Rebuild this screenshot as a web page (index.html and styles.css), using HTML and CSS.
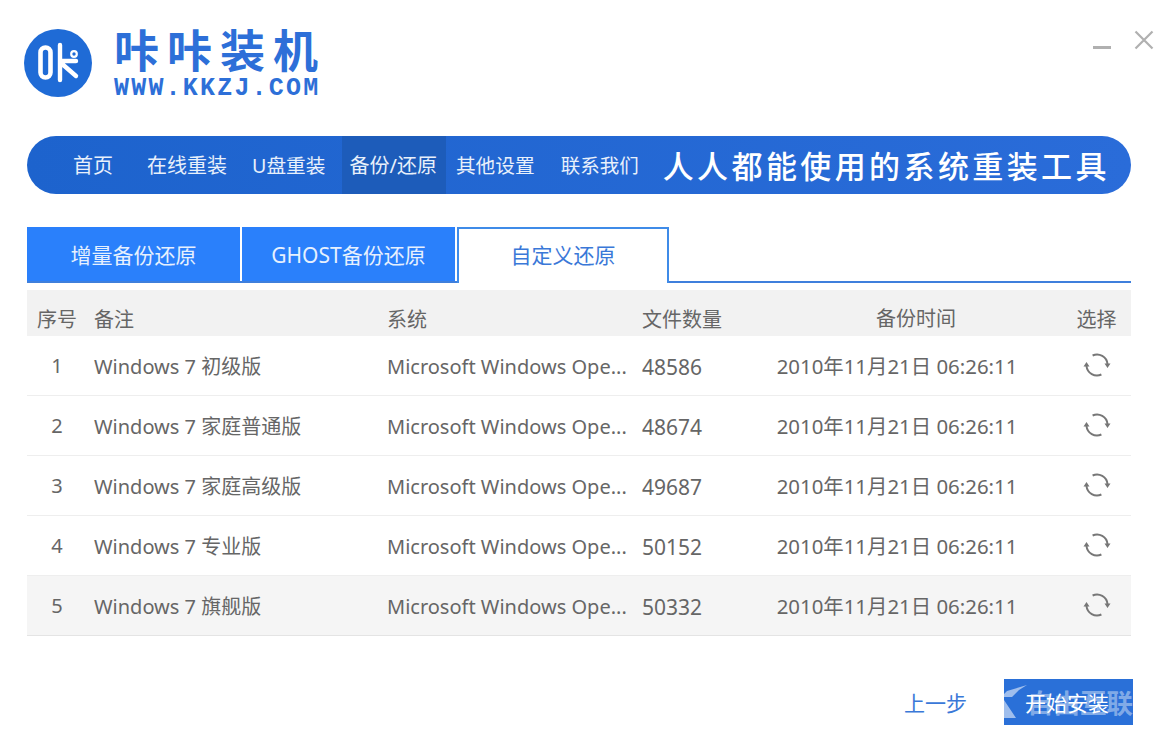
FILE: index.html
```html
<!DOCTYPE html>
<html lang="zh-CN">
<head>
<meta charset="utf-8">
<title>咔咔装机</title>
<link rel="stylesheet" href="styles.css">
</head>
<body>
<div class="app">
  <header class="top">
    <div class="brand">
      <svg class="mark" viewBox="0 0 68 68" width="68" height="68">
        <circle cx="34" cy="34" r="34" fill="#1f6bd6"/>
        <rect x="16.5" y="18.5" width="10" height="30" rx="5" fill="none" stroke="#fff" stroke-width="4.6"/>
        <path d="M36 16v35M36 32H52M37 34 52 47" fill="none" stroke="#fff" stroke-width="4.4" stroke-linecap="round"/>
        <circle cx="50" cy="25" r="2.8" fill="none" stroke="#fff" stroke-width="2.2"/>
      </svg>
      <div class="brand-text">
        <div class="brand-name">咔咔装机</div>
        <div class="brand-url">WWW.KKZJ.COM</div>
      </div>
    </div>
    <div class="win-btns">
      <svg class="win-min" width="18" height="4" viewBox="0 0 18 4"><rect width="18" height="3" fill="#b0b0b0"/></svg>
      <svg width="20" height="20" viewBox="0 0 20 20"><path d="M1.500 1.500 18.500 18.500M18.500 1.500 1.500 18.500" stroke="#b0b0b0" stroke-width="2.2" fill="none"/></svg>
    </div>
  </header>

  <nav class="nav">
    <a class="nav-item i-home">首页</a>
    <a class="nav-item i-online">在线重装</a>
    <a class="nav-item i-usb">U盘重装</a>
    <a class="nav-item active">备份/还原</a>
    <a class="nav-item i-other">其他设置</a>
    <a class="nav-item i-contact">联系我们</a>
    <span class="slogan">人人都能使用的系统重装工具</span>
  </nav>

  <div class="tabs">
    <a class="tab">增量备份还原</a>
    <a class="tab">GHOST备份还原</a>
    <a class="tab current">自定义还原</a>
  </div>

  <div class="table">
    <div class="row head">
      <span class="c-no">序号</span><span class="c-note">备注</span><span>系统</span><span>文件数量</span><span class="c-time">备份时间</span><span class="c-act">选择</span>
    </div>
    <div class="row">
      <span class="c-no">1</span><span class="c-note">Windows 7 初级版</span><span class="c-sys">Microsoft Windows Ope...</span><span class="c-num">48586</span><span class="c-time">2010年11月21日 06:26:11</span>
      <span class="c-act"><svg class="restore" viewBox="0 0 28 28"><use href="#r"/></svg></span>
    </div>
    <div class="row">
      <span class="c-no">2</span><span class="c-note">Windows 7 家庭普通版</span><span class="c-sys">Microsoft Windows Ope...</span><span class="c-num">48674</span><span class="c-time">2010年11月21日 06:26:11</span>
      <span class="c-act"><svg class="restore" viewBox="0 0 28 28"><use href="#r"/></svg></span>
    </div>
    <div class="row">
      <span class="c-no">3</span><span class="c-note">Windows 7 家庭高级版</span><span class="c-sys">Microsoft Windows Ope...</span><span class="c-num">49687</span><span class="c-time">2010年11月21日 06:26:11</span>
      <span class="c-act"><svg class="restore" viewBox="0 0 28 28"><use href="#r"/></svg></span>
    </div>
    <div class="row">
      <span class="c-no">4</span><span class="c-note">Windows 7 专业版</span><span class="c-sys">Microsoft Windows Ope...</span><span class="c-num">50152</span><span class="c-time">2010年11月21日 06:26:11</span>
      <span class="c-act"><svg class="restore" viewBox="0 0 28 28"><use href="#r"/></svg></span>
    </div>
    <div class="row last">
      <span class="c-no">5</span><span class="c-note">Windows 7 旗舰版</span><span class="c-sys">Microsoft Windows Ope...</span><span class="c-num">50332</span><span class="c-time">2010年11月21日 06:26:11</span>
      <span class="c-act"><svg class="restore" viewBox="0 0 28 28"><use href="#r"/></svg></span>
    </div>
  </div>

  <footer class="foot">
    <a class="prev">上一步</a>
    <a class="start">开始安装
      <svg class="wm-logo" width="24" height="46" viewBox="0 0 24 46" aria-hidden="true"><path d="M23 6 3 12 0 15v3h8l7-7zM0 21l12 18H0z" fill="#fff" fill-opacity=".55"/></svg>
      <b class="wm-text" aria-hidden="true">自由互联</b>
    </a>
  </footer>
</div>
<svg class="defs" width="0" height="0">
  <defs>
    <g id="r">
      <path d="M9.600 4.500A10.500 10.500 0 0 1 24.500 13M18.400 23.500A10.500 10.500 0 0 1 3.500 15" fill="none" stroke="#777" stroke-width="2"/>
      <path d="M21.500 12.500h6l-3 4.500zM.5 15.500h6l-3-4.500z" fill="#777"/>
    </g>
  </defs>
</svg>
</body>
</html>
```
FILE: styles.css
```css
* { box-sizing: border-box; }
html, body { margin: 0; padding: 0; background: #fff; }
body {
  width: 1160px;
  height: 742px;
  overflow: hidden;
  font-family: "Noto Sans", "Noto Sans CJK SC", sans-serif;
  color: #666;
}
.app { padding: 0 29px 0 27px; }
.defs { position: absolute; }

.top {
  height: 136px;
  display: flex;
  justify-content: space-between;
  align-items: flex-start;
}
.brand { display: flex; margin-left: -3px; padding-top: 29px; gap: 22px; }
.mark { display: block; }
.brand-text { color: #2d6fd8; }
.brand-name {
  font-family: "Noto Sans CJK SC", sans-serif;
  font-size: 45px;
  line-height: 45px;
  letter-spacing: 8px;
  font-weight: 700;
  white-space: nowrap;
  margin-top: -3px;
}
.brand-url {
  font-family: "Liberation Mono", monospace;
  font-size: 25px;
  font-weight: 700;
  line-height: 18px;
  margin-top: 9px;
  letter-spacing: 2.2px;
  white-space: nowrap;
}
.win-btns { display: flex; align-items: flex-start; gap: 23px; margin: 30px -23px 0 0; }
.win-min { margin-top: 16px; }

.nav {
  height: 58px;
  border-radius: 29px;
  background: linear-gradient(90deg, #1d63cd, #2a6cd9);
  display: flex;
  align-items: stretch;
  color: #fff;
  font-size: 20px;
  white-space: nowrap;
}
.nav-item { display: flex; align-items: center; color: #e8f0fb; padding-bottom: 2px; }
.i-home { margin-left: 46px; }
.i-online { margin-left: 34px; }
.i-usb { margin-left: 25px; font-size: 19.7px; }
.active { margin-left: 17px; padding: 0 9px 2px 7px; background: #1d5cba; }
.i-other { margin-left: 10px; font-size: 19.7px; }
.i-contact { margin-left: 26px; font-size: 19.5px; }
.slogan {
  margin-left: 24px;
  font-family: "Noto Sans CJK SC", sans-serif;
  font-size: 31px;
  font-weight: 500;
  letter-spacing: 3.4px;
  align-self: center;
  padding-bottom: 2px;
}

.tabs {
  margin-top: 33px;
  height: 56px;
  display: flex;
  gap: 2px;
  border-bottom: 2px solid #3f7fdc;
  font-size: 21px;
}
.tab {
  height: 54px;
  display: flex;
  align-items: center;
  justify-content: center;
  background: #2a80fb;
  color: #e6f0fe;
}
.tab:nth-child(1) { width: 213px; }
.tab:nth-child(2) { width: 213px; }
.current {
  width: 212px;
  height: 56px;
  padding-bottom: 4px;
  background: #fff;
  color: #3a78d8;
  border: 2px solid #3f8be8;
  border-bottom: 0;
}

.table { margin-top: 7px; font-size: 20px; }
.row {
  display: grid;
  grid-template-columns: 60px 300px 255px 90px 330px 69px;
  height: 60px;
  align-items: center;
  border-bottom: 1px solid #eee;
  white-space: nowrap;
}
.head { height: 46px; background: #f2f2f2; border-bottom: 0; padding-top: 10px; }
.last { background: #f5f5f5; border-bottom-color: #e4e4e4; }
.c-no, .c-time, .c-act { text-align: center; }
.c-note { padding-left: 7px; }
.c-sys { padding-top: 1px; }
.c-num { font-size: 21px; padding-top: 2px; }
.row .c-time { font-size: 20.4px; padding-bottom: 1px; }
.head .c-time { font-size: 20px; padding-left: 38px; }
.restore { display: block; width: 28px; height: 28px; margin: -1px auto 0; }

.foot {
  margin: 43px -2px 0 0;
  display: flex;
  justify-content: flex-end;
  align-items: center;
  gap: 37px;
}
.prev { color: #3a78d8; font-size: 21px; }
.start {
  position: relative;
  width: 129px;
  height: 46px;
  background: #2a70d8;
  color: #fff;
  font-size: 21px;
  display: flex;
  align-items: center;
  padding-left: 21px;
  overflow: hidden;
  white-space: nowrap;
}
.wm-logo { position: absolute; left: 0; top: 0; }
.wm-text {
  position: absolute;
  left: 23px;
  top: 9px;
  color: rgba(255,255,255,.42);
  font-family: "Noto Sans CJK SC", sans-serif;
  font-size: 26.5px;
  font-weight: 700;
  line-height: 28px;
}
```
